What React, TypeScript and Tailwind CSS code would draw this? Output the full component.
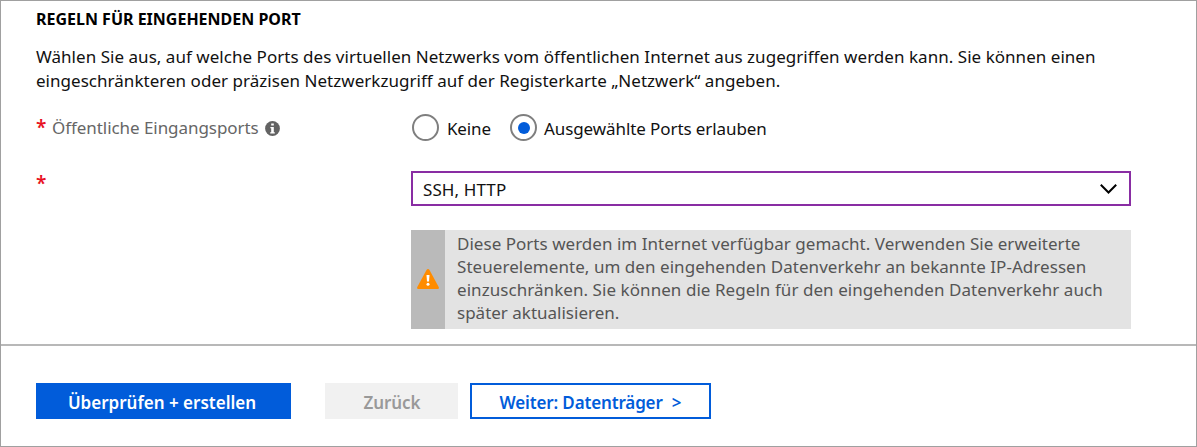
import React from "react";

function RequiredMark() {
  return (
    <span className="block w-4 shrink-0 text-[19px] leading-6 font-semibold text-[#e81123]" aria-hidden="true">
      *
    </span>
  );
}

function InfoIcon() {
  return (
    <svg className="size-[15px]" viewBox="0 0 15 15" aria-hidden="true">
      <circle cx="7.5" cy="7.5" r="7.4" fill="#636363" />
      <path d="M6.2 2.6h2.6v2H6.2zM5.4 6h3.4v5.2h1v1.3H5.2v-1.3h1V7.2h-.8z" fill="#fff" />
    </svg>
  );
}

function WarningIcon() {
  return (
    <svg className="mb-px h-5 w-[22px]" viewBox="0 0 22 20" aria-hidden="true">
      <path
        d="M9.5 1Q11-.9 12.5 1L21.7 17.9Q22.5 20 20.7 20H1.3Q-.5 20 .3 17.9Z"
        fill="#ff8c00"
      />
      <path d="M9.5 6h3l-.5 6.6h-2z" fill="#fff" />
      <circle cx="11" cy="15.2" r="1.5" fill="#fff" />
    </svg>
  );
}

function Radio({ checked = false }: { checked?: boolean }) {
  return (
    <span
      role="radio"
      aria-checked={checked}
      className="flex size-[27px] shrink-0 items-center justify-center rounded-full border-2 border-[#7f7f7f] bg-white"
    >
      {checked && <span className="size-3 rounded-full bg-[#015cda]" />}
    </span>
  );
}

export default function App() {
  return (
    <div className="flex h-[447px] w-[1197px] flex-col border border-[#a0a0a0] bg-white font-['Noto_Sans','Open_Sans',sans-serif] text-[17px] leading-6 whitespace-nowrap text-[#111]">
      <section className="flex h-[343px] flex-col pt-1.5 pl-[35px]">
        <h2 className="text-base leading-6 font-bold text-black">REGELN FÜR EINGEHENDEN PORT</h2>

        <div className="mt-[14px]">
          <p className="tracking-[0.035px]">
            Wählen Sie aus, auf welche Ports des virtuellen Netzwerks vom öffentlichen Internet aus zugegriffen werden
            kann. Sie können einen
          </p>
          <p className="tracking-[0.03px]">
            eingeschränkteren oder präzisen Netzwerkzugriff auf der Registerkarte „Netzwerk“ angeben.
          </p>
        </div>

        <div className="mt-[21px] flex h-[29px]">
          <div className="flex w-[375px] pt-px">
            <RequiredMark />
            <span className="pt-px tracking-[-0.06px] text-[#666]">Öffentliche Eingangsports</span>
            <span className="pt-[6px] pl-[6px]">
              <InfoIcon />
            </span>
          </div>
          <div className="flex h-[27px] items-center pl-px" role="radiogroup">
            <Radio />
            <span className="w-[63px] pt-[3px] pl-[8px] tracking-[-0.15px]">Keine</span>
            <span className="w-2" />
            <Radio checked />
            <span className="pt-[3px] pl-[7px] tracking-[-0.09px]">Ausgewählte Ports erlauben</span>
          </div>
        </div>

        <div className="mt-7 flex h-[35px]">
          <div className="w-[375px]">
            <RequiredMark />
          </div>
          <div className="flex w-[720px] items-center justify-between border-2 border-[#892da3] pr-3 pl-[10px]">
            <span className="pt-[3px] tracking-[0.1px]">SSH, HTTP</span>
            <svg className="h-[10px] w-[17px]" viewBox="0 0 17 10" fill="none" aria-hidden="true">
              <path d="M.8.8 8.5 8.5 16.2.8" stroke="#000" strokeWidth="2" />
            </svg>
          </div>
        </div>

        <div className="mt-6 ml-[375px] flex h-[99px] w-[720px] bg-[#e3e3e3]">
          <div className="flex w-[34px] items-center justify-center bg-[#bababa]">
            <WarningIcon />
          </div>
          <div className="pt-[2px] pl-[12px] leading-[23px] text-[#555]">
            <p className="tracking-[0.025px]">
              Diese Ports werden im Internet verfügbar gemacht. Verwenden Sie erweiterte
            </p>
            <p className="tracking-[0.05px]">Steuerelemente, um den eingehenden Datenverkehr an bekannte IP-Adressen</p>
            <p className="tracking-[0.06px]">
              einzuschränken. Sie können die Regeln für den eingehenden Datenverkehr auch
            </p>
            <p>später aktualisieren.</p>
          </div>
        </div>
      </section>

      <footer className="flex flex-1 items-start border-t-2 border-[#b8b8b8] pt-[37px] pl-[35px] font-semibold">
        <button className="flex h-9 w-[255px] items-center justify-center bg-[#015cda] pt-[3px] pr-[3px] text-white">
          Überprüfen + erstellen
        </button>
        <button className="ml-[34px] flex h-9 w-[133px] items-center justify-center bg-[#f1f1f1] pt-[3px] pl-px tracking-[-0.1px] text-[#999]">
          Zurück
        </button>
        <button className="ml-3 flex h-9 w-[241px] items-center justify-center gap-[9px] border-2 border-[#015cda] pt-[3px] text-[#015cda]">
          <span className="tracking-[-0.15px]">Weiter: Datenträger</span>
          <span>&gt;</span>
        </button>
      </footer>
    </div>
  );
}
